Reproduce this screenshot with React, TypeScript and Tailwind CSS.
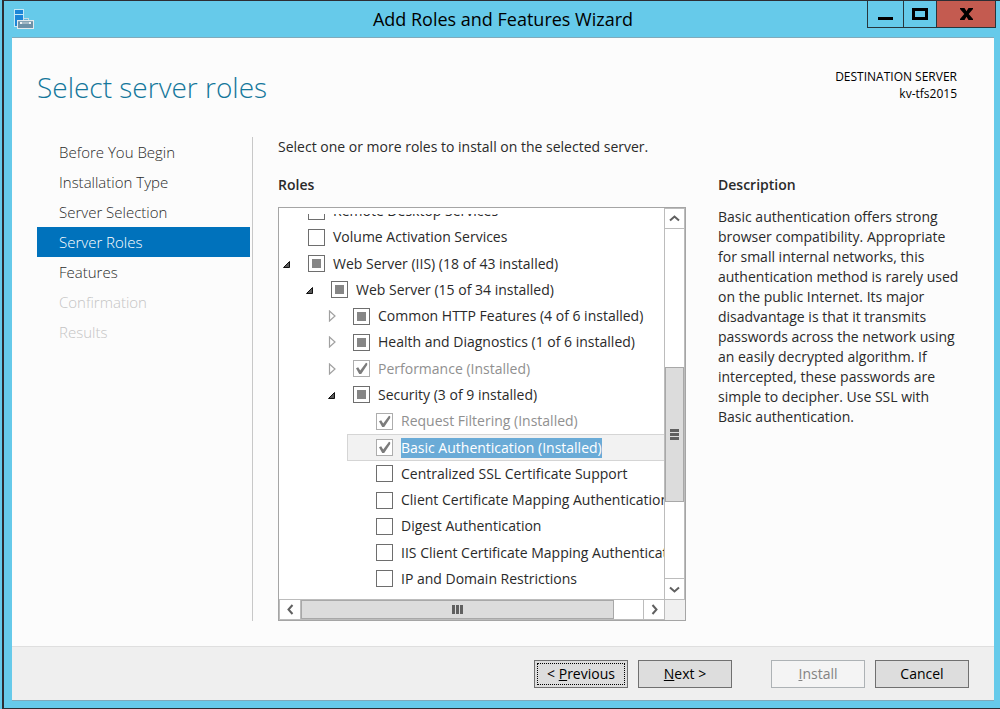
import React, { useState } from 'react';
import clsx from 'clsx';

type CheckState = 'none' | 'partial' | 'checked';

interface RoleNode {
    id: string;
    label: string;
    level: number;
    state: CheckState;
    expander?: 'open' | 'closed';
    installed?: boolean;
}

const steps = [
    { name: 'Before You Begin', enabled: true },
    { name: 'Installation Type', enabled: true },
    { name: 'Server Selection', enabled: true },
    { name: 'Server Roles', enabled: true },
    { name: 'Features', enabled: true },
    { name: 'Confirmation', enabled: false },
    { name: 'Results', enabled: false },
];

const initialRoles: RoleNode[] = [
    { id: 'rds', label: 'Remote Desktop Services', level: 0, state: 'none' },
    { id: 'vas', label: 'Volume Activation Services', level: 0, state: 'none' },
    { id: 'iis', label: 'Web Server (IIS) (18 of 43 installed)', level: 0, state: 'partial', expander: 'open' },
    { id: 'web', label: 'Web Server (15 of 34 installed)', level: 1, state: 'partial', expander: 'open' },
    { id: 'http', label: 'Common HTTP Features (4 of 6 installed)', level: 2, state: 'partial', expander: 'closed' },
    { id: 'health', label: 'Health and Diagnostics (1 of 6 installed)', level: 2, state: 'partial', expander: 'closed' },
    { id: 'perf', label: 'Performance (Installed)', level: 2, state: 'checked', expander: 'closed', installed: true },
    { id: 'security', label: 'Security (3 of 9 installed)', level: 2, state: 'partial', expander: 'open' },
    { id: 'filtering', label: 'Request Filtering (Installed)', level: 3, state: 'checked', installed: true },
    { id: 'basic', label: 'Basic Authentication (Installed)', level: 3, state: 'checked', installed: true },
    { id: 'ssl', label: 'Centralized SSL Certificate Support', level: 3, state: 'none' },
    { id: 'clientcert', label: 'Client Certificate Mapping Authentication', level: 3, state: 'none' },
    { id: 'digest', label: 'Digest Authentication', level: 3, state: 'none' },
    { id: 'iiscert', label: 'IIS Client Certificate Mapping Authentication', level: 3, state: 'none' },
    { id: 'ip', label: 'IP and Domain Restrictions', level: 3, state: 'none' },
];

const indents = ['ml-0', 'ml-[23px]', 'ml-[45px]', 'ml-[68px]'];

const ServerIcon = () => (
    <svg width="20" height="20" viewBox="0 0 20 20" shapeRendering="crispEdges" aria-hidden="true">
        <rect x="0" y="0" width="10" height="18" fill="#c4e8f6" />
        <rect x="1" y="1" width="8" height="4" fill="#1c86d8" />
        <rect x="1" y="6" width="8" height="11" fill="#1c86d8" />
        <path d="M9 9h6v2H9z" fill="#c9dbe4" />
        <path d="M10 10h4v1h-4z" fill="#66b6d8" />
        <rect x="3" y="11" width="17" height="9" fill="#e2e9ed" />
        <rect x="4" y="12" width="15" height="7" fill="#6c91a8" />
        <rect x="4" y="12" width="15" height="1" fill="#86a4b6" />
        <rect x="6" y="13" width="11" height="2" fill="#a3b9c6" />
        <rect x="6" y="13" width="2" height="2" fill="#eef3f6" />
        <rect x="15" y="13" width="2" height="2" fill="#eef3f6" />
    </svg>
);

const Expander = ({ kind, label }: { kind: 'open' | 'closed'; label: string }) => (
    <button type="button" aria-label={`Toggle ${label}`} aria-expanded={kind === 'open'}>
        <svg width="9" height="12" viewBox="0 0 9 12" className="block">
            {kind === 'open' ? (
                <path d="M7.5 3.5v6h-6z" fill="#595959" stroke="#111" />
            ) : (
                <path d="M2.5 1v10L8 6z" fill="#fff" stroke="#a0a0a0" strokeWidth="1.2" />
            )}
        </svg>
    </button>
);

const Chevron = ({ d }: { d: string }) => (
    <svg width="11" height="11" viewBox="0 0 11 11" fill="none" stroke="#606060" strokeWidth="2">
        <path d={d} />
    </svg>
);

const scrollButton = 'flex shrink-0 items-center justify-center bg-white border-[#bcbcbc]';

interface RoleRowProps {
    role: RoleNode;
    selected: boolean;
    onToggle: (id: string) => void;
}

const RoleRow: React.FC<RoleRowProps> = ({ role, selected, onToggle }) => (
    <li
        className={clsx(
            'flex items-center border border-r-0 pl-[2px]',
            indents[role.level],
            selected ? 'border-[#d5d5d5] bg-[#f2f2f2]' : 'border-transparent'
        )}
    >
        <span className="w-[26px] shrink-0 flex">
            {role.expander && <Expander kind={role.expander} label={role.label} />}
        </span>
        <span className="grid size-[17px] shrink-0 place-items-center">
            <input
                id={role.id}
                type="checkbox"
                checked={role.state === 'checked'}
                ref={el => {
                    if (el) el.indeterminate = role.state === 'partial';
                }}
                disabled={role.installed}
                onChange={() => onToggle(role.id)}
                className={clsx(
                    'col-start-1 row-start-1 size-[17px] appearance-none border bg-white',
                    role.installed ? 'border-[#adadad]' : 'border-[#6e6e6e]'
                )}
            />
            {role.state === 'partial' && (
                <span className="pointer-events-none col-start-1 row-start-1 size-[9px] bg-[#868686]" />
            )}
            {role.state === 'checked' && (
                <svg width="13" height="13" viewBox="0 0 13 13" className="pointer-events-none col-start-1 row-start-1">
                    <path d="M1 6.200 3.200 5.200 5.200 8.500 11 .8 12.200 1.200V3L6.200 12H4.200z" fill="#7c7c7c" />
                </svg>
            )}
        </span>
        <label
            htmlFor={role.id}
            className={clsx(
                'ml-2 whitespace-nowrap leading-5',
                selected ? 'bg-[#6aabd7] text-white' : role.installed ? 'text-[#909090]' : 'text-[#2a2a2a]'
            )}
        >
            {role.label}
        </label>
    </li>
);

const RolesTree = () => {
    const [roles, setRoles] = useState<RoleNode[]>(initialRoles);

    const handleToggle = (id: string) => {
        setRoles(roles.map(r => (r.id === id ? { ...r, state: r.state === 'none' ? 'checked' : 'none' } : r)));
    };

    return (
        <div className="mt-3 grid h-[414px] grid-cols-[minmax(0,1fr)_21px] grid-rows-[minmax(0,1fr)_21px] border border-[#a5a5a5] bg-white">
            <div className="min-h-0 pt-[6px]">
                <div className="h-full overflow-hidden">
                    <ul className="-mt-4 grid h-[394px] auto-rows-fr">
                        {roles.map(role => (
                            <RoleRow key={role.id} role={role} selected={role.id === 'basic'} onToggle={handleToggle} />
                        ))}
                    </ul>
                </div>
            </div>

            <div className="flex flex-col border-x border-[#bcbcbc]">
                <button type="button" aria-label="Scroll up" className={clsx(scrollButton, 'h-[21px] border-y')}>
                    <Chevron d="M1 7.5l4.5-4 4.5 4" />
                </button>
                <div className="flex-[138]" />
                <div className="flex flex-[134] flex-col items-center justify-center gap-px border border-[#a8a8a8] bg-[#dcdcdc]">
                    <span className="h-[3px] w-[9px] bg-[#606060]" />
                    <span className="h-[3px] w-[9px] bg-[#606060]" />
                    <span className="h-[3px] w-[9px] bg-[#606060]" />
                </div>
                <div className="flex-[76]" />
                <button type="button" aria-label="Scroll down" className={clsx(scrollButton, 'h-[21px] border-t')}>
                    <Chevron d="M1 3.5l4.5 4 4.5-4" />
                </button>
            </div>

            <div className="flex border-y border-[#bcbcbc]">
                <button type="button" aria-label="Scroll left" className={clsx(scrollButton, 'w-[22px] border-x')}>
                    <Chevron d="M7.5 1l-4 4.5 4 4.5" />
                </button>
                <div className="flex flex-[311] items-center justify-center gap-px border border-[#a8a8a8] bg-[#dcdcdc]">
                    <span className="h-[9px] w-[3px] bg-[#606060]" />
                    <span className="h-[9px] w-[3px] bg-[#606060]" />
                    <span className="h-[9px] w-[3px] bg-[#606060]" />
                </div>
                <div className="flex-[29]" />
                <button type="button" aria-label="Scroll right" className={clsx(scrollButton, 'w-[21px] border-l')}>
                    <Chevron d="M3.5 1l4 4.5-4 4.5" />
                </button>
            </div>
            <div className="border-l border-t border-[#bcbcbc] bg-[#f0f0f0]" />
        </div>
    );
};

const footerButton = 'h-7 w-[94px] border text-center';

export default function App() {
    return (
        <div className="min-h-screen bg-[#66caea] pl-[2px] font-['Open_Sans','Noto_Sans',sans-serif] text-sm text-[#2a2a2a]">
            <div className="flex min-h-screen flex-col border-y border-l-2 border-[#2d2d33]">
                <div className="flex h-9 items-start pl-[10px] pr-1">
                    <div className="flex w-[125px] pt-2">
                        <ServerIcon />
                    </div>
                    <h1 className="flex-1 text-center text-lg leading-9 text-black">Add Roles and Features Wizard</h1>
                    <div className="flex h-[27px] w-[129px] border-x border-b border-[#27363d]">
                        <button type="button" aria-label="Minimize" className="flex w-[35px] items-center justify-center">
                            <svg width="15" height="13" viewBox="0 0 15 13"><path d="M0 9h15v3H0z" /></svg>
                        </button>
                        <button type="button" aria-label="Maximize" className="flex w-[34px] items-center justify-center border-x border-[#27363d]">
                            <svg width="16" height="12" viewBox="0 0 16 12">
                                <path d="M0 0h16v12H0zM3 3v6h10V3z" fillRule="evenodd" />
                            </svg>
                        </button>
                        <button type="button" aria-label="Close" className="flex flex-1 items-center justify-center bg-[#c45b50]">
                            <svg width="13" height="12" viewBox="0 0 13 12">
                                <path d="M0 0h4.500l2 3.200 2-3.200H13v1L8.700 6 13 11v1H8.500l-2-3.200-2 3.200H0v-1l4.300-5L0 1z" />
                            </svg>
                        </button>
                    </div>
                </div>

                <div className="ml-2 mr-[6px] mb-[7px] flex flex-1 flex-col border-y border-[#80aabb] bg-[#fcfcfc]">
                    <header className="flex items-start justify-between pb-[31px] pl-[25px] pr-[37px] pt-[30px]">
                        <h2 className="text-[28px] font-light leading-[38px] text-[#14779b]">Select server roles</h2>
                        <div className="text-right text-xs leading-[17px] text-black">
                            <div>DESTINATION SERVER</div>
                            <div>kv-tfs2015</div>
                        </div>
                    </header>

                    <div className="flex flex-1 pb-[25px] pl-[25px] pr-8">
                        <nav className="w-[216px] shrink-0 border-r border-[#c8c8c8] pr-[2px]">
                            {steps.map(step => (
                                <button
                                    key={step.name}
                                    type="button"
                                    disabled={!step.enabled}
                                    className={clsx(
                                        'block h-[30px] w-full pl-[22px] pt-[2px] text-left text-[15px] font-light',
                                        step.name === 'Server Roles' && 'bg-[#0072bc] text-white',
                                        !step.enabled && 'text-[#c4c4c4]'
                                    )}
                                >
                                    {step.name}
                                </button>
                            ))}
                        </nav>

                        <main className="ml-[25px] min-w-0 flex-1">
                            <p className="whitespace-nowrap leading-5">Select one or more roles to install on the selected server.</p>
                            <div className="mt-[18px] flex gap-8">
                                <section className="min-w-0 flex-1">
                                    <h3 className="font-semibold leading-5">Roles</h3>
                                    <RolesTree />
                                </section>
                                <section className="w-[244px] shrink-0">
                                    <h3 className="font-semibold leading-5">Description</h3>
                                    <p className="mt-3 leading-5">
                                        Basic authentication offers strong browser compatibility. Appropriate for small internal
                                        networks, this authentication method is rarely used on the public Internet. Its major
                                        disadvantage is that it transmits passwords across the network using an easily decrypted
                                        algorithm. If intercepted, these passwords are simple to decipher. Use SSL with Basic
                                        authentication.
                                    </p>
                                </section>
                            </div>
                        </main>
                    </div>

                    <footer className="flex justify-end border-t border-[#dfdfdf] bg-[#efefef] pb-3 pr-[25px] pt-[13px] text-black">
                        <button type="button" className={clsx(footerButton, 'border-[#707070] bg-[#dddddd] p-[2px]')}>
                            <span className="flex h-full items-center justify-center border border-dotted border-black">
                                <span>&lt; <u>P</u>revious</span>
                            </span>
                        </button>
                        <button type="button" className={clsx(footerButton, 'ml-[10px] border-[#707070] bg-[#dddddd]')}>
                            <u>N</u>ext &gt;
                        </button>
                        <button type="button" disabled className={clsx(footerButton, 'ml-[39px] border-[#adb2b5] bg-[#f4f4f4] text-[#838383]')}>
                            <u>I</u>nstall
                        </button>
                        <button type="button" className={clsx(footerButton, 'ml-[10px] border-[#707070] bg-[#dddddd]')}>
                            Cancel
                        </button>
                    </footer>
                </div>
            </div>
        </div>
    );
}
